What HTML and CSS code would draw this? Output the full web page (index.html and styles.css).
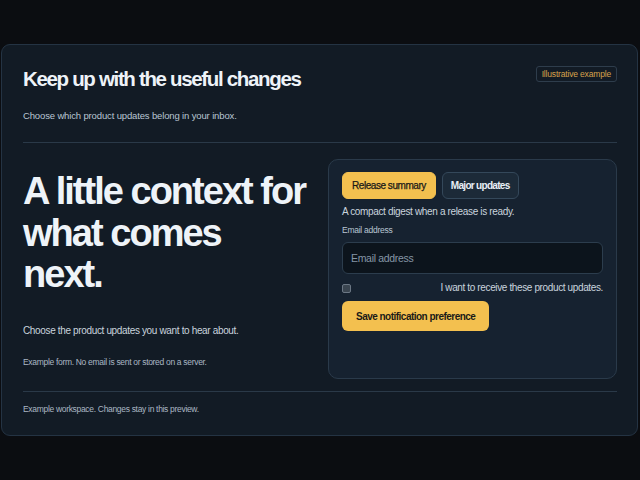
FILE: index.html
```html
<!DOCTYPE html>
<html lang="en">
<head>
<meta charset="utf-8">
<title>Notification preferences</title>
<link rel="stylesheet" href="styles.css">
</head>
<body>
<main class="card">
  <header class="head">
    <div class="head-text">
      <h1 class="title">Keep up with the useful changes</h1>
      <p class="subtitle">Choose which product updates belong in your inbox.</p>
    </div>
    <span class="badge">Illustrative example</span>
  </header>
  <section class="main">
    <div class="intro">
      <h2 class="hero">A little context for<br>what comes<br>next.</h2>
      <p class="lead">Choose the product updates you want to hear about.</p>
      <p class="note">Example form. No email is sent or stored on a server.</p>
    </div>
    <form class="panel">
      <div class="tabs">
        <button type="button" class="tab tab-active">Release summary</button>
        <button type="button" class="tab tab-plain">Major updates</button>
      </div>
      <p class="desc">A compact digest when a release is ready.</p>
      <label class="label" for="email">Email address</label>
      <input class="input" id="email" type="email" placeholder="Email address">
      <label class="check">
        <input type="checkbox" class="box">
        <span class="check-text">I want to receive these product updates.</span>
      </label>
      <button type="button" class="save">Save notification preference</button>
    </form>
  </section>
  <footer class="foot">Example workspace. Changes stay in this preview.</footer>
</main>
</body>
</html>
```
FILE: styles.css
```css
* { box-sizing: border-box; }
html, body { margin: 0; padding: 0; }
body {
  background: #0b0d11;
  font-family: "Liberation Sans", Arial, sans-serif;
  color: #e8eef5;
  width: 640px;
  height: 480px;
  padding: 44px 2px 0 1px;
}
.card {
  background: #121b25;
  border: 1px solid #243343;
  border-radius: 9px;
  height: 392px;
  padding: 0 20px 0 21px;
  display: flex;
  flex-direction: column;
}
.head {
  display: flex;
  justify-content: space-between;
  align-items: flex-start;
  padding-top: 21px;
  padding-bottom: 20px;
  border-bottom: 1px solid #2a3948;
}
.title {
  margin: 0;
  font-size: 20.5px;
  line-height: 26px;
  font-weight: 700;
  letter-spacing: -0.065em;
  color: #eef3f8;
}
.subtitle {
  margin: 18px 0 0;
  font-size: 9.5px;
  line-height: 12px;
  color: #b9c6d3;
  letter-spacing: -0.015em;
}
.badge {
  border: 1px solid #2e3d4c;
  border-radius: 3px;
  padding: 2px 5px;
  font-size: 8.5px;
  line-height: 10px;
  color: #d7a24c;
  letter-spacing: -0.02em;
}
.main {
  display: grid;
  grid-template-columns: 1fr 289px;
  gap: 18px;
  padding-top: 16px;
  padding-bottom: 12px;
  border-bottom: 1px solid #2a3948;
}
.intro { padding-top: 12px; }
.hero {
  margin: 0;
  font-size: 38px;
  line-height: 41.5px;
  font-weight: 700;
  letter-spacing: -0.052em;
  color: #eef3f8;
}
.lead {
  margin: 28px 0 0;
  font-size: 10px;
  line-height: 13px;
  color: #c9d4de;
  letter-spacing: -0.035em;
}
.note {
  margin: 20px 0 0;
  font-size: 8.5px;
  line-height: 11px;
  color: #aab7c4;
  letter-spacing: -0.037em;
}
.panel {
  margin: 0;
  background: #162230;
  border: 1px solid #2a3a4a;
  border-radius: 10px;
  padding: 12px 13px 47px;
  display: flex;
  flex-direction: column;
  align-items: flex-start;
}
.tabs { display: flex; gap: 6px; }
.tab {
  font-family: inherit;
  font-size: 10px;
  height: 27px;
  padding: 0 8px;
  border-radius: 6px;
  border: 1px solid #34485a;
  background: #1c2a38;
  color: #e8eef5;
}
.tab-plain {
  font-weight: 700;
  letter-spacing: -0.07em;
}
.tab-active {
  padding: 0 9px;
  background: #f3c04f;
  border-color: #f3c04f;
  color: #1a1a18;
  font-weight: 400;
  letter-spacing: -0.045em;
  -webkit-text-stroke: 0.25px #1a1a18;
}
.desc {
  margin: 7px 0 0;
  font-size: 10px;
  line-height: 12px;
  color: #c9d4de;
  letter-spacing: -0.035em;
}
.label {
  margin-top: 7px;
  font-size: 8.5px;
  line-height: 10px;
  color: #b9c6d3;
  letter-spacing: -0.03em;
}
.input {
  margin-top: 7px;
  width: 100%;
  height: 32px;
  background: #0c141c;
  border: 1px solid #2c3d4d;
  border-radius: 6px;
  padding: 0 8px;
  font-family: inherit;
  font-size: 10.5px;
  color: #e8eef5;
  letter-spacing: -0.03em;
}
.input::placeholder { color: #8596a6; }
.check {
  margin-top: 8px;
  width: 100%;
  display: flex;
  justify-content: space-between;
  align-items: center;
}
.box {
  appearance: none;
  -webkit-appearance: none;
  margin: 0;
  width: 9px;
  height: 9px;
  border: 1px solid #6b7784;
  border-radius: 2px;
  background: #3a4550;
}
.check-text {
  font-size: 10px;
  line-height: 12px;
  color: #c9d4de;
  letter-spacing: -0.037em;
}
.save {
  margin-top: 7px;
  height: 30px;
  padding: 0 14px;
  border: none;
  border-radius: 6px;
  background: #f3c04f;
  color: #1a1a18;
  font-family: inherit;
  font-size: 10px;
  font-weight: 700;
  letter-spacing: -0.052em;
}
.foot {
  padding-top: 12px;
  font-size: 8.5px;
  line-height: 11px;
  color: #aab7c4;
  letter-spacing: -0.037em;
}
```
